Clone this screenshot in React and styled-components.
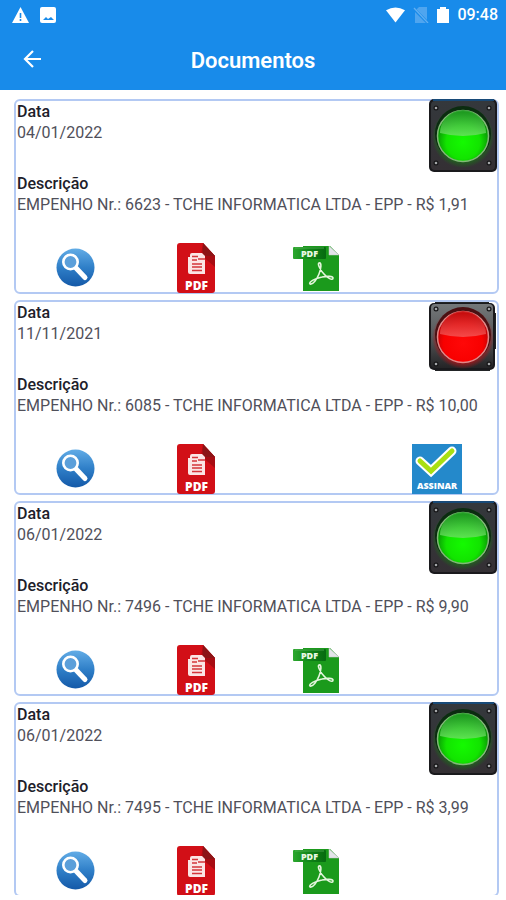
import React from 'react';
import styled, { createGlobalStyle } from 'styled-components';

const GlobalStyle = createGlobalStyle`
  * {
    box-sizing: border-box;
  }

  body {
    margin: 0;
    background: #fff;
    color: #20202a;
    font-family: Roboto, 'Liberation Sans', sans-serif;
  }
`;

const Screen = styled.div`
  display: flex;
  flex-direction: column;
  height: 100vh;
  padding-bottom: 5px;
`;

const Header = styled.header`
  flex-shrink: 0;
  background: #188bea;
  color: #fff;
`;

const StatusBar = styled.div`
  display: flex;
  align-items: center;
  justify-content: space-between;
  height: 30px;
  padding: 0 8px 0 12px;
`;

const StatusGroup = styled.div`
  display: flex;
  align-items: center;
  gap: ${({ $gap }) => $gap};

  svg {
    display: block;
  }
`;

const Clock = styled.span`
  font-size: 16px;
  font-weight: 500;
  line-height: 20px;
`;

const NavBar = styled.div`
  display: grid;
  grid-template-columns: 64px 1fr 64px;
  align-items: center;
  height: 60px;
`;

const BackButton = styled.button`
  display: flex;
  align-items: center;
  justify-content: center;
  height: 60px;
  padding: 0 0 2px;
  border: 0;
  background: none;
  color: inherit;
`;

const Title = styled.h1`
  margin: 0;
  padding-top: 2px;
  text-align: center;
  font-size: 22px;
  font-weight: 600;
  line-height: 28px;
`;

const List = styled.main`
  display: flex;
  flex-direction: column;
  flex: 1;
  min-height: 0;
  gap: 6px;
  padding: 9px 7px 0 14px;
  overflow: hidden;
`;

const Card = styled.article`
  flex-shrink: 0;
  border: 2px solid #b3c9f3;
  border-radius: 6px;
`;

const CardTop = styled.div`
  display: flex;
  justify-content: space-between;
  height: 72px;
`;

const Field = styled.div`
  padding: 0 1px;
`;

const Label = styled.div`
  font-size: 16px;
  font-weight: 500;
  line-height: 21px;
`;

const Value = styled.div`
  color: #50505a;
  font-size: 16px;
  line-height: 21px;
  white-space: nowrap;
`;

const Light = styled.svg`
  display: block;
  flex-shrink: 0;
  width: 69px;
  height: 74px;
  margin: -2px -1px 0 0;
`;

const Actions = styled.div`
  display: grid;
  grid-template-columns: repeat(4, 1fr);
  height: 50px;
  margin: 28px 0 -1px;
`;

const ActionButton = styled.button`
  display: flex;
  align-items: center;
  justify-content: center;
  grid-column: ${({ $column }) => $column};
  padding: 0;
  border: 0;
  background: none;

  svg {
    display: block;
  }
`;

const documents = [
  { id: 6623, date: '04/01/2022', value: '1,91', signed: true },
  { id: 6085, date: '11/11/2021', value: '10,00', signed: false },
  { id: 7496, date: '06/01/2022', value: '9,90', signed: true },
  { id: 7495, date: '06/01/2022', value: '3,99', signed: true },
];

const GradientDefs = styled.svg`
  position: absolute;
`;

const Gradients = () => (
  <GradientDefs width="0" height="0" aria-hidden="true">
    <defs>
      <radialGradient id="lampGreen" cx="50%" cy="62%" r="55%">
        <stop offset="0" stopColor="#14fa00" />
        <stop offset="0.6" stopColor="#12e400" />
        <stop offset="1" stopColor="#088a06" />
      </radialGradient>
      <radialGradient id="lampRed" cx="50%" cy="62%" r="55%">
        <stop offset="0" stopColor="#ff0808" />
        <stop offset="0.7" stopColor="#f80000" />
        <stop offset="1" stopColor="#b80408" />
      </radialGradient>
      <linearGradient id="shineGreen" x1="0" y1="0" x2="0" y2="1">
        <stop offset="0" stopColor="#1c9a20" />
        <stop offset="1" stopColor="#6fe065" />
      </linearGradient>
      <linearGradient id="shineRed" x1="0" y1="0" x2="0" y2="1">
        <stop offset="0" stopColor="#c80808" />
        <stop offset="1" stopColor="#f45a5a" />
      </linearGradient>
      <radialGradient id="haloGreen">
        <stop offset="0.75" stopColor="#1c6a18" />
        <stop offset="1" stopColor="#1c6a18" stopOpacity="0" />
      </radialGradient>
      <radialGradient id="haloRed">
        <stop offset="0.75" stopColor="#b01418" />
        <stop offset="1" stopColor="#b01418" stopOpacity="0" />
      </radialGradient>
      <linearGradient id="caseGreen" x1="0" y1="0" x2="0" y2="1">
        <stop offset="0" stopColor="#34383c" />
        <stop offset="1" stopColor="#343034" />
      </linearGradient>
      <linearGradient id="caseRed" x1="0" y1="0" x2="0" y2="1">
        <stop offset="0" stopColor="#74787a" />
        <stop offset="0.5" stopColor="#56585a" />
        <stop offset="1" stopColor="#242426" />
      </linearGradient>
      <linearGradient id="ball" x1="0" y1="0" x2="0" y2="1">
        <stop offset="0" stopColor="#62ace6" />
        <stop offset="0.5" stopColor="#2f7fc8" />
        <stop offset="1" stopColor="#1459a8" />
      </linearGradient>
      <linearGradient id="tag" x1="0" y1="0" x2="1" y2="0">
        <stop offset="0" stopColor="#2ca82e" />
        <stop offset="0.5" stopColor="#108418" />
        <stop offset="1" stopColor="#066a10" />
      </linearGradient>
    </defs>
  </GradientDefs>
);

const StatusLight = ({ signed }) => {
  const tone = signed ? 'Green' : 'Red';
  return (
    <Light viewBox="0 0 69 74" role="img" aria-label={signed ? 'Assinado' : 'Pendente'}>
      {!signed && <path d="M6 2h54v3h5v8h2v36h-2v16h-4v6H6z" fill="#222426" />}
      <rect x="0" y={signed ? 0 : 3} width={signed ? 68 : 66} height={signed ? 73 : 67} rx="5" fill="#1a1a1d" />
      <rect x="2" y={signed ? 2 : 4} width={signed ? 64 : 62} height={signed ? 69 : 64} rx="4" fill={`url(#case${tone})`} />
      {signed && <path d="M4 1h61" stroke="#184a78" strokeWidth="2" />}
      <circle cx="34" cy="38" r="31" fill={`url(#halo${tone})`} />
      <circle cx="34" cy="35" r="28" fill={signed ? '#0b2c10' : '#4a1012'} />
      <circle cx="34" cy="37" r="25.500" fill={`url(#lamp${tone})`} stroke={signed ? '#82b878' : '#e08888'} strokeWidth="1.500" />
      <path d="M11 34a23 23 0 0 1 46 0Q34 40 11 34z" fill={`url(#shine${tone})`} opacity="0.8" />
      {[[7, 9], [60, 9], [7, 64], [60, 64]].map(([x, y]) => (
        <g key={`${x}-${y}`}>
          <circle cx={x} cy={y} r="2.500" fill="#151517" />
          <circle cx={x} cy={y} r="1.300" fill="#a4a6a8" />
        </g>
      ))}
    </Light>
  );
};

const SearchIcon = () => (
  <svg width="40" height="40" viewBox="0 0 40 40">
    <circle cx="19.500" cy="19.500" r="19" fill="url(#ball)" />
    <path d="M20 20L29 29.500" stroke="#fff" strokeWidth="5" strokeLinecap="round" />
    <circle cx="14.500" cy="14" r="7.200" fill="#5b9fda" stroke="#fff" strokeWidth="2.600" />
  </svg>
);

const PdfIcon = () => (
  <svg width="39" height="50" viewBox="0 0 39 50">
    <path d="M3 0h23l12 13v34a3 3 0 0 1-3 3H3a3 3 0 0 1-3-3V3a3 3 0 0 1 3-3z" fill="#d20f17" />
    <path d="M26 0l12 13v11L24 12z" fill="#a80c12" />
    <path d="M26 0l12 13H29q-3 0-3-3z" fill="#8c1416" />
    <path d="M15 10h10l3 3v18H13q-2 0-2-2V14h2v-2q0-2 2-2z" fill="#fbe5e5" />
    <path d="M15 13.500h6M15 17h5M21 16h7M15 21h10M15 24h10M15 27.500h10" stroke="#d4353a" strokeWidth="1.500" />
    <text x="19.500" y="47" textAnchor="middle" fontFamily="Open Sans, sans-serif" fontSize="12" fontWeight="800" fill="#fff">PDF</text>
  </svg>
);

const SignedPdfIcon = () => (
  <svg width="47" height="48" viewBox="0 0 47 48">
    <path d="M10 2h27l9 9v36H10z" fill="#1b9a1c" />
    <path d="M36 2l10 9H36z" fill="#e4e4ea" stroke="#c4c8c6" strokeWidth="0.500" />
    <path d="M1 3h31q1 0 1 1v10q0 1-1 1H1q-1 0-1-1V4q0-1 1-1z" fill="url(#tag)" />
    <path d="M2 4h29" stroke="#5cb85c" opacity="0.700" />
    <text x="16.500" y="12.500" textAnchor="middle" fontFamily="Open Sans, sans-serif" fontSize="9" fontWeight="800" fill="#e9f8e4">PDF</text>
    <path
      d="M26 19c3-1 2 6 0 11c-2 5-6 11-9 10c-2-2 6-6 12-7c5-1 11-1 11 1c0 3-6 0-9-4c-3-3-7-10-5-11z"
      fill="none"
      stroke="#e4f5dc"
      strokeWidth="1.600"
      strokeLinejoin="round"
    />
  </svg>
);

const SignIcon = () => (
  <svg width="50" height="50" viewBox="0 0 50 50">
    <rect width="50" height="50" fill="#2489cb" />
    <path d="M8 17L19 27L40 7" fill="none" stroke="#fff" strokeWidth="9" strokeLinecap="round" />
    <path d="M8 17L19 27L40 7" fill="none" stroke="#a9df12" strokeWidth="5" strokeLinecap="round" />
    <text x="25" y="45" textAnchor="middle" fontFamily="Open Sans, sans-serif" fontSize="9" fontWeight="800" fill="#fff">ASSINAR</text>
  </svg>
);

const DocumentCard = ({ id, date, value, signed }) => (
  <Card>
    <CardTop>
      <Field>
        <Label>Data</Label>
        <Value>{date}</Value>
      </Field>
      <StatusLight signed={signed} />
    </CardTop>
    <Field>
      <Label>Descrição</Label>
      <Value>EMPENHO Nr.: {id} - TCHE INFORMATICA LTDA - EPP - R$ {value}</Value>
    </Field>
    <Actions>
      <ActionButton $column={1} aria-label="Visualizar">
        <SearchIcon />
      </ActionButton>
      <ActionButton $column={2} aria-label="Abrir PDF">
        <PdfIcon />
      </ActionButton>
      {signed ? (
        <ActionButton $column={3} aria-label="Abrir PDF assinado">
          <SignedPdfIcon />
        </ActionButton>
      ) : (
        <ActionButton $column={4} aria-label="Assinar">
          <SignIcon />
        </ActionButton>
      )}
    </Actions>
  </Card>
);

const App = () => (
  <Screen>
    <GlobalStyle />
    <Gradients />
    <Header>
      <StatusBar>
        <StatusGroup $gap="11px">
          <svg width="17" height="16" viewBox="0 0 17 16">
            <path d="M8.500 0L17 16H0z" fill="#fff" />
            <path d="M8.500 6v5M8.500 12v2" stroke="#188bea" strokeWidth="1.600" />
          </svg>
          <svg width="16" height="16" viewBox="0 0 16 16">
            <rect width="16" height="16" rx="2" fill="#fff" />
            <path d="M3 13l3-3 2 2 3-2 3 3z" fill="#188bea" />
          </svg>
        </StatusGroup>
        <StatusGroup $gap="8px">
          <svg width="19" height="16" viewBox="0 0 20 16">
            <path d="M0 3Q10-3 20 3L10 16z" fill="#fff" />
          </svg>
          <svg width="16" height="16" viewBox="0 0 16 16">
            <path d="M6 0h8v16H2V4z" fill="#4fa5ef" />
            <path d="M0 1l15 15" stroke="#188bea" strokeWidth="3" />
            <path d="M1 1l14 15" stroke="#62aff1" strokeWidth="1.300" />
          </svg>
          <svg width="12" height="16" viewBox="0 0 12 16">
            <path d="M3 0h6v2h3v14H0V2h3z" fill="#fff" />
          </svg>
          <Clock>09:48</Clock>
        </StatusGroup>
      </StatusBar>
      <NavBar>
        <BackButton aria-label="Voltar">
          <svg width="18" height="18" viewBox="0 0 18 18" fill="none" stroke="#fff" strokeWidth="2.200">
            <path d="M18 9H2M10 1L2 9l8 8" />
          </svg>
        </BackButton>
        <Title>Documentos</Title>
      </NavBar>
    </Header>
    <List>
      {documents.map((doc) => (
        <DocumentCard key={doc.id} {...doc} />
      ))}
    </List>
  </Screen>
);

export default App;
